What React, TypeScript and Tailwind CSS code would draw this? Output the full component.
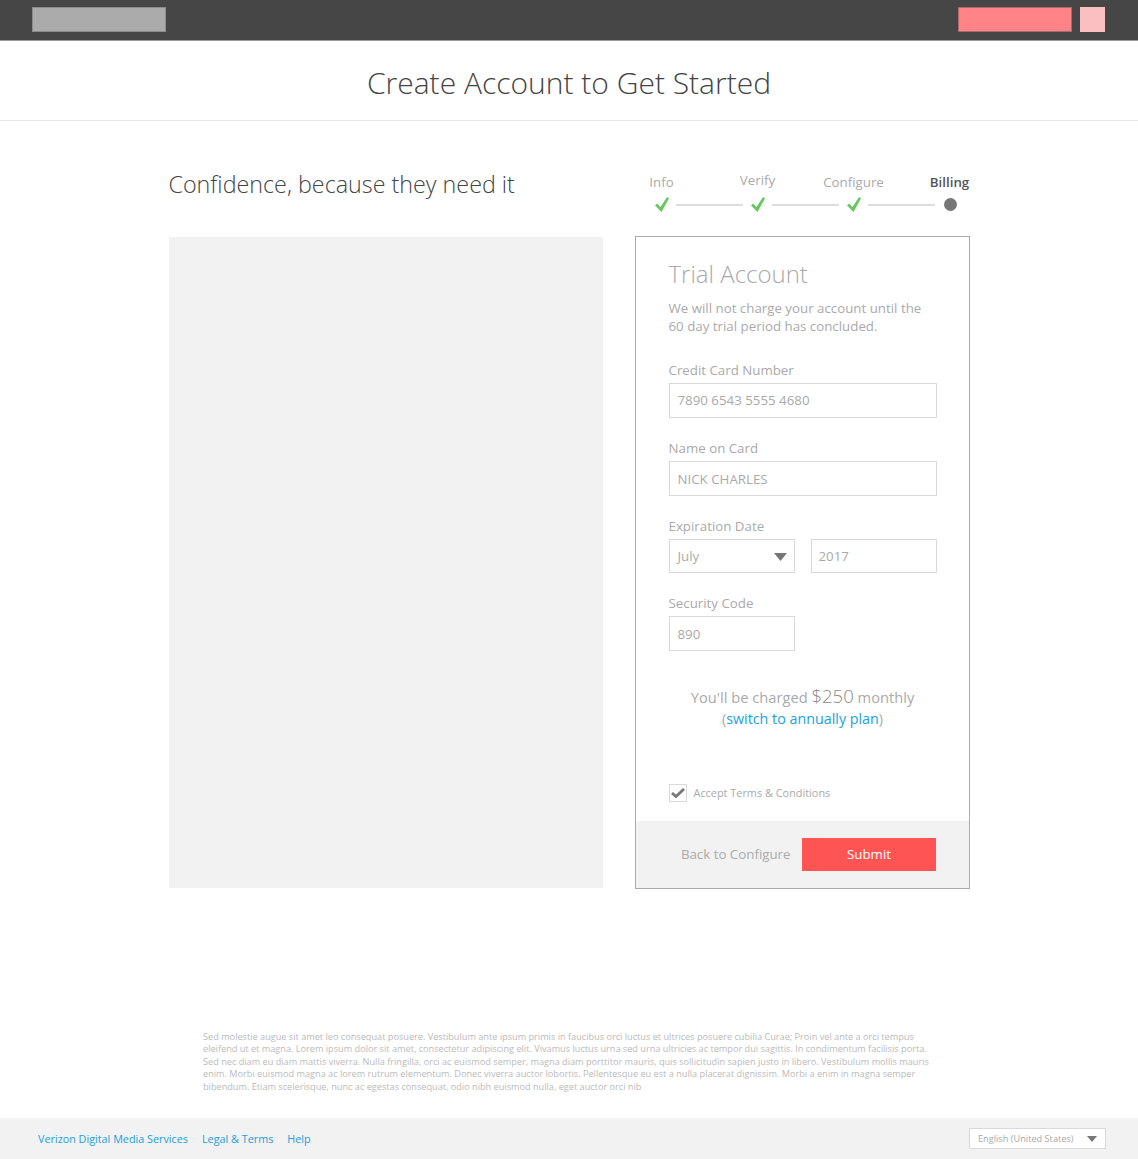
const steps = ['Info', 'Verify', 'Configure', 'Billing']

function CheckMark({ className }: { className: string }) {
  return (
    <svg viewBox="0 0 14 15" className={className}>
      <path d="M0 8.5 2 6.5 5.5 10 12 0 14 1.2 6.5 15z" fill="currentColor" />
    </svg>
  )
}

function Field({ label, value, className, valueClass = '' }: { label: string; value: string; className: string; valueClass?: string }) {
  return (
    <div className={className}>
      <p className="text-[13.3px] leading-[18px] text-[#aaaaaa]">{label}</p>
      <div className={`mt-[4px] flex h-[35px] items-center border border-[#d9d9d9] px-[8px] text-[13.3px] text-[#aaaaaa] ${valueClass}`}>{value}</div>
    </div>
  )
}

export default function App() {
  return (
    <div className="flex h-[1159px] flex-col bg-white font-['Open_Sans',sans-serif]">
      <header className="flex h-[41px] items-center justify-between border-b border-[#999999] bg-[#464646] pr-[33px] pb-[1px] pl-[32px]">
        <div className="h-[25px] w-[134px] border border-[#8c8c8c] bg-[#ababab]" />
        <div className="flex gap-[8px]">
          <div className="h-[25px] w-[114px] border border-[#a86a6e] bg-[#ff8387]" />
          <div className="h-[25px] w-[25px] bg-[#fbbfc1]" />
        </div>
      </header>

      <div className="flex h-[80px] items-center justify-center border-b border-[#e8e8e8] pt-[4px]">
        <h1 className="text-[30px] font-light text-[#444444]">Create Account to Get Started</h1>
      </div>

      <main className="mx-auto flex w-[801px] justify-between pt-[47px]">
        <div className="w-[434px]">
          <h2 className="h-[69px] text-[23.3px] leading-[32px] font-light text-[#444444]">Confidence, because they need it</h2>
          <div className="h-[651px] bg-[#f2f2f2]" />
        </div>

        <div className="w-[335px]">
          <div className="h-[68px]">
            <div className="flex h-[25px] items-end gap-[56px] pl-[7px] text-[13.3px]">
              {steps.map((step) => (
                <div key={step} className="flex w-[40px] justify-center whitespace-nowrap">
                  {step === 'Billing' ? (
                    <span className="font-semibold text-[#555555]">{step}</span>
                  ) : step === 'Verify' ? (
                    <span className="mb-[2px] text-[#aaaaaa]">{step}</span>
                  ) : (
                    <span className="text-[#aaaaaa]">{step}</span>
                  )}
                </div>
              ))}
            </div>
            <div className="mt-[4px] flex items-center pl-[20px]">
              {steps.slice(0, 3).map((step) => (
                <div key={step} className="flex items-center">
                  <CheckMark className="h-[15px] w-[14px] text-[#64c85f]" />
                  <div className="mt-[1px] mr-[8px] ml-[7px] h-[2px] w-[67px] bg-[#dddddd]" />
                </div>
              ))}
              <div className="ml-[1px] size-[13px] rounded-full bg-[#777777]" />
            </div>
          </div>

          <div className="flex h-[653px] flex-col border border-[#aaaaaa]">
            <div className="flex-1 pt-[20px] pr-[32px] pl-[33px]">
              <h3 className="text-[24px] leading-[34px] font-light text-[#aaaaaa]">Trial Account</h3>
              <p className="mt-[8px] text-[13.3px] leading-[18px] text-[#aaaaaa]">
                We will not charge your account until the 60 day trial period has concluded.
              </p>
              <Field label="Credit Card Number" value="7890 6543 5555 4680" className="mt-[26px]" />
              <Field label="Name on Card" value="NICK CHARLES" className="mt-[21px]" valueClass="pt-[2px]" />
              <div className="mt-[21px]">
                <p className="text-[13.3px] leading-[18px] text-[#aaaaaa]">Expiration Date</p>
                <div className="mt-[4px] flex gap-[16px]">
                  <div className="flex h-[34px] w-[126px] items-center justify-between border border-[#d9d9d9] pt-[1px] pr-[7px] pl-[8px] text-[13.3px] text-[#aaaaaa]">
                    July
                    <svg width="13" height="8" viewBox="0 0 13 8"><path d="M0 0h13L6.5 8z" fill="#777777" /></svg>
                  </div>
                  <div className="flex h-[34px] w-[126px] items-center border border-[#d9d9d9] px-[7px] pt-[1px] text-[13.3px] text-[#aaaaaa]">2017</div>
                </div>
              </div>
              <Field label="Security Code" value="890" className="mt-[21px] w-[126px]" valueClass="pt-[2px]" />
              <div className="mt-[34px] text-center text-[14.3px] leading-[22px] text-[#aaaaaa]">
                <p className="text-[14.7px]">You'll be charged <span className="text-[18.5px] font-light text-[#888888]">$250</span> monthly</p>
                <p>(<a className="text-[#1ba1dc]">switch to annually plan</a>)</p>
              </div>
              <label className="mt-[54px] flex items-center gap-[7px] text-[10.9px] text-[#aaaaaa]">
                <span className="flex size-[18px] items-center justify-center border border-[#d9d9d9]">
                  <svg width="14" height="10" viewBox="0 0 14 10">
                    <path d="M1 5 5 8.5 13 1" fill="none" stroke="#777777" strokeWidth="2.8" />
                  </svg>
                </span>
                Accept Terms &amp; Conditions
              </label>
            </div>
            <div className="flex h-[67px] items-center justify-end gap-[11px] bg-[#f2f2f2] pr-[33px]">
              <span className="text-[13.3px] text-[#aaaaaa]">Back to Configure</span>
              <button className="h-[33px] w-[134px] bg-[#ff5454] pl-[1px] text-[13.3px] text-white">Submit</button>
            </div>
          </div>
        </div>
      </main>

      <p className="mt-auto ml-[203px] w-[730px] text-[9.17px] leading-[12.5px] text-[#bbbbbb]">
        Sed molestie augue sit amet leo consequat posuere. Vestibulum ante ipsum primis in faucibus orci luctus et ultrices posuere cubilia Curae; Proin vel ante a orci tempus eleifend ut et magna. Lorem ipsum dolor sit amet, consectetur adipiscing elit. Vivamus luctus urna sed urna ultricies ac tempor dui sagittis. In condimentum facilisis porta. Sed nec diam eu diam mattis viverra. Nulla fringilla, orci ac euismod semper, magna diam porttitor mauris, quis sollicitudin sapien justo in libero. Vestibulum mollis mauris enim. Morbi euismod magna ac lorem rutrum elementum. Donec viverra auctor lobortis. Pellentesque eu est a nulla placerat dignissim. Morbi a enim in magna semper bibendum. Etiam scelerisque, nunc ac egestas consequat, odio nibh euismod nulla, eget auctor orci nib
      </p>

      <footer className="mt-[25px] flex h-[41px] items-center justify-between bg-[#f2f2f2] pr-[32px] pl-[38px]">
        <nav className="flex gap-[14px] pt-[1px] text-[10.8px] text-[#1ba1dc]">
          <a>Verizon Digital Media Services</a>
          <a>Legal &amp; Terms</a>
          <a>Help</a>
        </nav>
        <div className="flex h-[21px] w-[137px] items-center justify-between border border-[#d9d9d9] bg-white px-[8px] text-[9.2px] text-[#aaaaaa]">
          English (United States)
          <svg width="10" height="6" viewBox="0 0 10 6"><path d="M0 0h10L5 6z" fill="#777777" /></svg>
        </div>
      </footer>
    </div>
  )
}
